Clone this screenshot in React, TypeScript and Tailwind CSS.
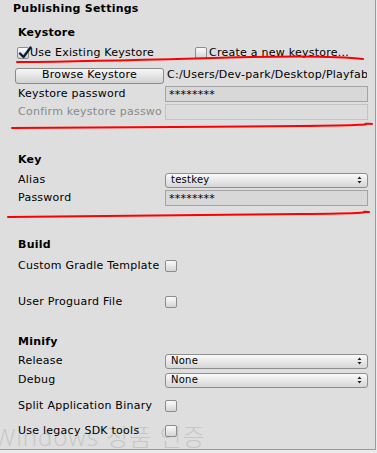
import React from "react";

const font = { fontFamily: '"DejaVu Sans", Verdana, sans-serif' };

function Check({ checked = false }: { checked?: boolean }) {
  return (
    <span className="relative inline-block w-[12px] h-[12px] rounded-[2px] border border-[#8c8c8c] bg-gradient-to-b from-[#fbfbfb] to-[#d4d4d4] shrink-0">
      {checked && (
        <svg viewBox="0 0 14 14" className="absolute left-[0px] top-[-2px] w-[14px] h-[14px]">
          <path d="M2 7.5 L5.5 11 L12.5 1.5" fill="none" stroke="#0d1b3a" strokeWidth="2.4" strokeLinecap="round" strokeLinejoin="round" />
        </svg>
      )}
    </span>
  );
}

function Field({ value = "", disabled = false }: { value?: string; disabled?: boolean }) {
  return (
    <div
      className={`w-[203px] h-[16px] border flex items-center pl-[3px] text-[11px] leading-none text-black ${
        disabled ? "border-[#c4c4c4] bg-[#dcdcdc]" : "border-[#a4a4a4] bg-[#d8d8d8]"
      }`}
    >
      {value}
    </div>
  );
}

function Popup({ value }: { value: string }) {
  return (
    <div className="w-[203px] h-[15px] rounded-[3px] border border-[#8e8e8e] bg-gradient-to-b from-[#fafafa] to-[#d6d6d6] flex items-center justify-between pl-[5px] pr-[5px] text-[10px] leading-none text-black">
      <span>{value}</span>
      <svg viewBox="0 0 5 8" className="w-[5px] h-[8px]">
        <path d="M0.5 3 L2.5 0.5 L4.5 3 Z M0.5 5 L2.5 7.5 L4.5 5 Z" fill="#222" />
      </svg>
    </div>
  );
}

function Row({ label, children, mt, gray = false }: { label: string; children?: React.ReactNode; mt: string; gray?: boolean }) {
  return (
    <div className={`flex items-center h-[16px] ${mt}`}>
      <span className={`w-[144px] mr-[3px] shrink-0 whitespace-nowrap overflow-hidden text-[11px] ${gray ? "text-[#8a8a8a]" : "text-black"}`}>
        {label}
      </span>
      {children}
    </div>
  );
}

function Heading({ text, mt }: { text: string; mt: string }) {
  return <div className={`h-[16px] flex items-center text-[11px] font-bold text-black ${mt}`}>{text}</div>;
}

export default function App() {
  return (
    <div className="relative w-[377px] h-[453px] bg-[#ebebeb] overflow-hidden tracking-[0.25px]" style={font}>
      <div className="relative w-[376px] h-[450px] bg-[#dedede] border-r border-b border-[#9a9a9a]">
        {/* Windows activation watermark */}
        <div
          className="absolute left-[-6px] top-[419px] text-[24px] font-light text-[#c6c6c6] whitespace-nowrap tracking-[1px]"
          style={{ fontFamily: '"Open Sans", "Noto Sans CJK KR", sans-serif' }}
        >
          Windows 정품 인증
        </div>

        <div className="relative flex flex-col">
          <div className="h-[17px] mt-[1px] flex items-center pl-[13px] text-[11px] font-bold text-black">Publishing Settings</div>

          <div className="pl-[18px] flex flex-col">
            <Heading text="Keystore" mt="mt-[7px]" />

            <div className="flex items-center h-[16px] mt-[4px] ml-[-1px]">
              <Check checked />
              <span className="ml-[1px] w-[165px] text-[11px] text-black whitespace-nowrap">Use Existing Keystore</span>
              <Check />
              <span className="ml-[2px] text-[11px] text-black whitespace-nowrap">Create a new keystore...</span>
            </div>

            <div className="flex items-center h-[17px] mt-[6px] ml-[-3px]">
              <div className="w-[149px] h-[16px] rounded-[3px] border border-[#8a8a8a] bg-gradient-to-b from-[#f7f7f7] to-[#d2d2d2] flex items-center justify-center text-[11px] text-black">
                Browse Keystore
              </div>
              <span className="ml-[3px] w-[200px] overflow-hidden whitespace-nowrap text-[11px] text-black">
                C:/Users/Dev-park/Desktop/Playfab
              </span>
            </div>

            <Row label="Keystore password" mt="mt-[2px]">
              <Field value="********" />
            </Row>
            <Row label="Confirm keystore password" mt="mt-[2px]" gray>
              <Field disabled />
            </Row>

            <Heading text="Key" mt="mt-[32px]" />
            <Row label="Alias" mt="mt-[4px]">
              <Popup value="testkey" />
            </Row>
            <Row label="Password" mt="mt-[2px]">
              <Field value="********" />
            </Row>

            <Heading text="Build" mt="mt-[31px]" />
            <Row label="Custom Gradle Template" mt="mt-[5px]">
              <Check />
            </Row>
            <Row label="User Proguard File" mt="mt-[20px]">
              <Check />
            </Row>

            <Heading text="Minify" mt="mt-[24px]" />
            <Row label="Release" mt="mt-[3px]">
              <Popup value="None" />
            </Row>
            <Row label="Debug" mt="mt-[3px]">
              <Popup value="None" />
            </Row>
            <Row label="Split Application Binary" mt="mt-[10px]">
              <Check />
            </Row>
            <Row label="Use legacy SDK tools" mt="mt-[9px]">
              <Check />
            </Row>
          </div>
        </div>

        {/* red hand-drawn annotations */}
        <svg className="absolute left-0 top-0 w-[377px] h-[453px] pointer-events-none" viewBox="0 0 377 453">
          <path d="M17 62 C 120 61, 200 58, 250 57 S 340 56, 363 59" fill="none" stroke="#ff0000" strokeWidth="2" strokeLinecap="round" />
          <path d="M12 128 C 80 127, 200 127, 300 126 S 350 123, 372 124" fill="none" stroke="#ff0000" strokeWidth="2" strokeLinecap="round" />
          <path d="M8 217 C 100 216, 200 215, 300 214 S 350 211, 369 212" fill="none" stroke="#ff0000" strokeWidth="2" strokeLinecap="round" />
        </svg>
      </div>
    </div>
  );
}
